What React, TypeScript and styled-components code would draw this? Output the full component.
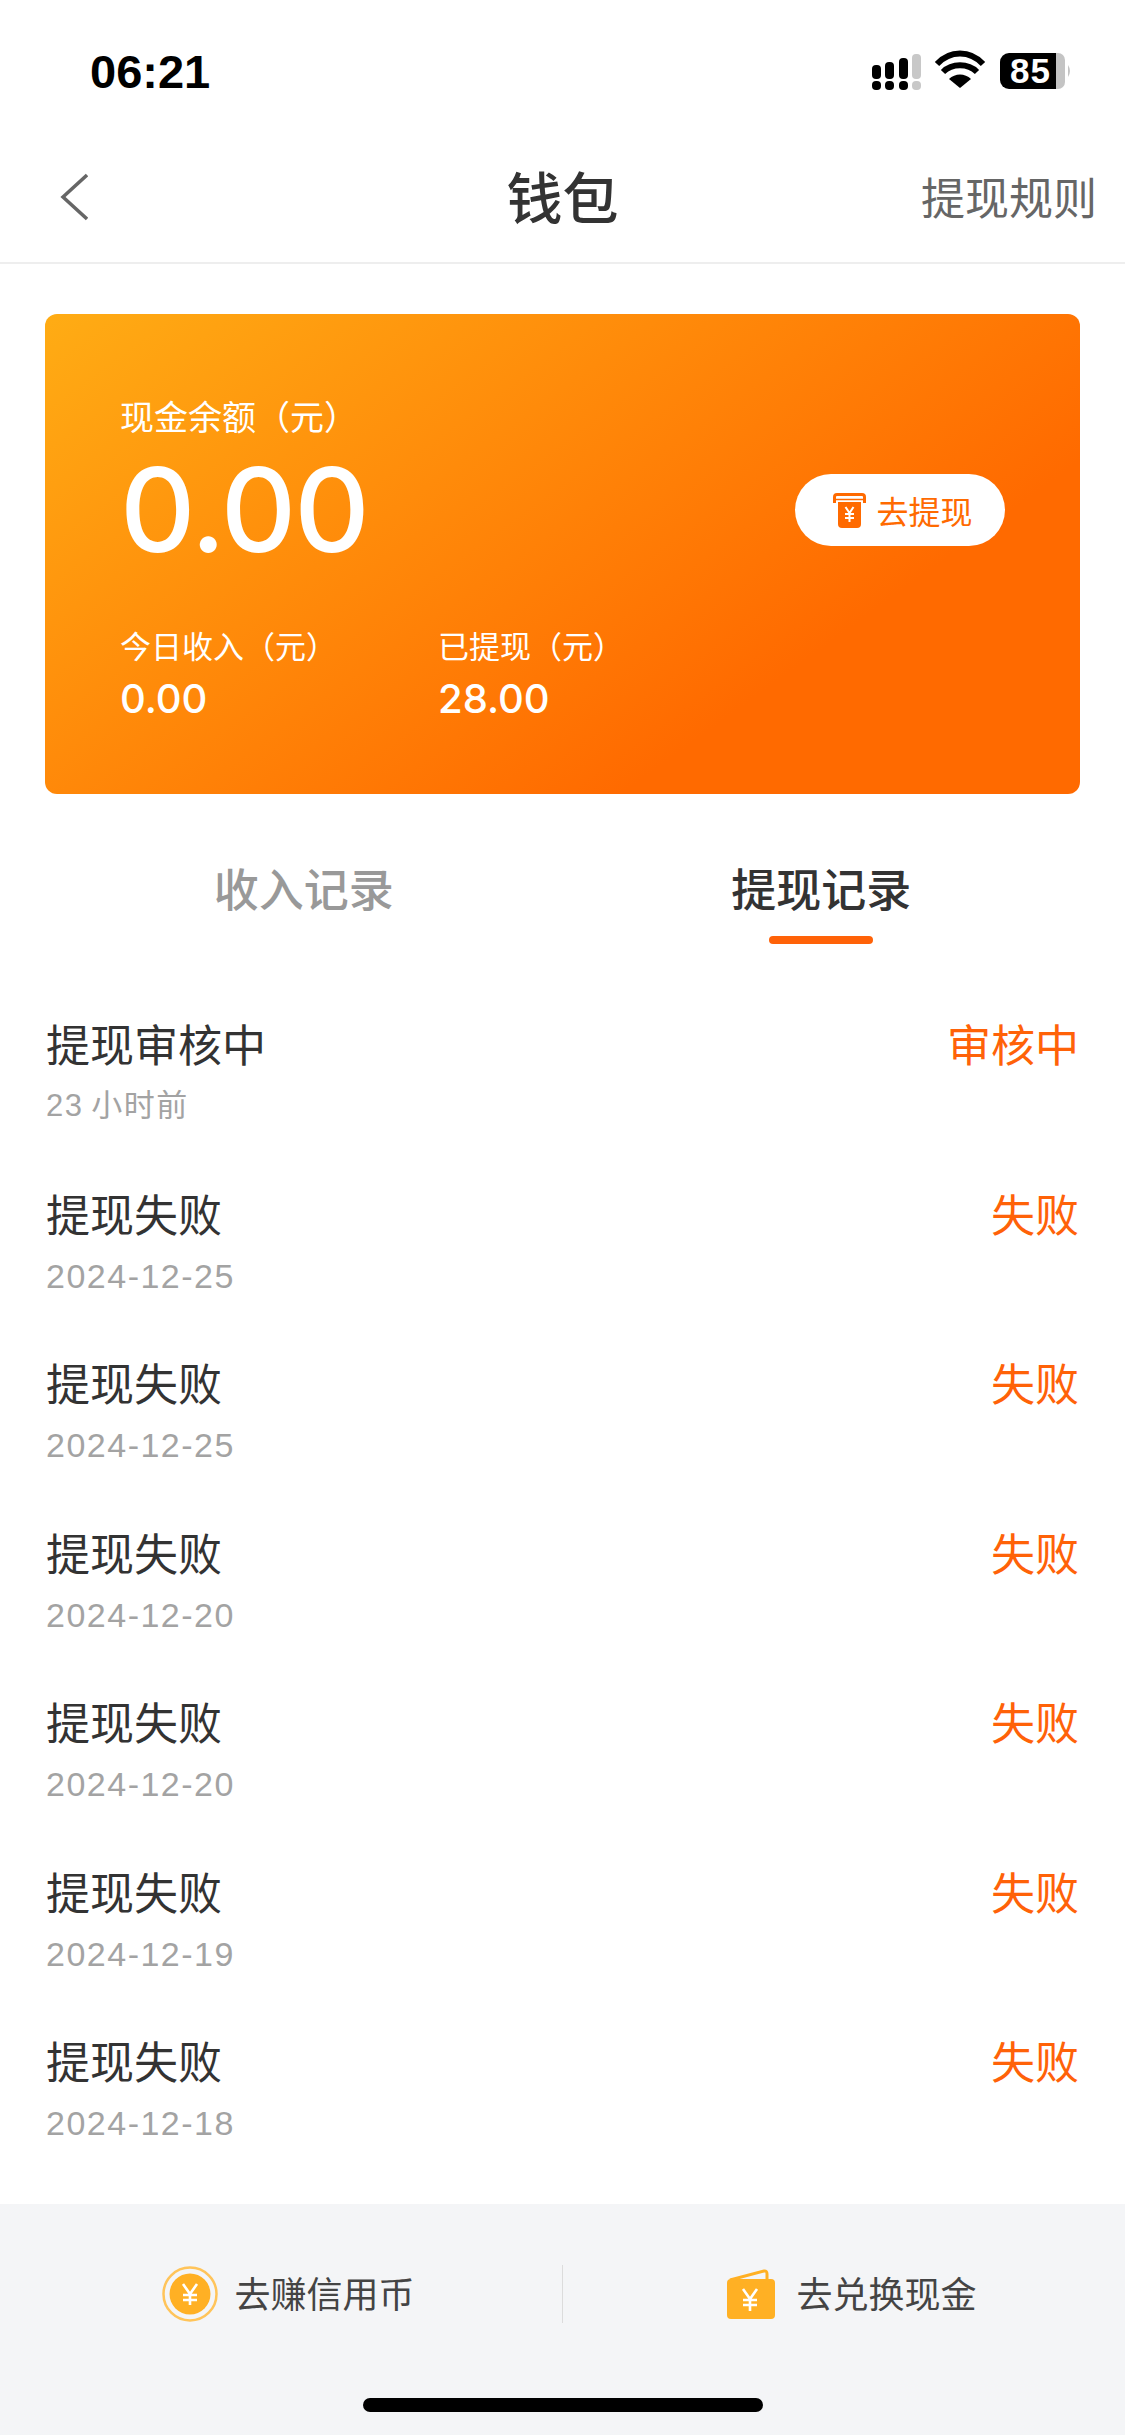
import React from "react";
import styled, { createGlobalStyle } from "styled-components";

const Global = createGlobalStyle`
  html, body { margin: 0; padding: 0; background: #fff; }
  * { box-sizing: border-box; }
  body { font-family: "Noto Sans CJK SC", "Liberation Sans", sans-serif; }
`;
const Page = styled.div`
  position: relative; width: 1125px; height: 2435px; background: #fff; overflow: hidden;
  display: flex; flex-direction: column;
`;
const StatusBar = styled.div`
  height: 132px; padding: 40px 53px 0 90px; display: flex; justify-content: space-between; align-items: flex-start;
`;
const Time = styled.div`
  font-family: "Liberation Sans", sans-serif; font-weight: 700; font-size: 47px; line-height: 64px; color: #000;
`;
const NavBar = styled.div`
  height: 132px; display: flex; align-items: center; justify-content: space-between; padding: 0 28px 0 60px;
  border-bottom: 2px solid #eeeeee; position: relative;
`;
const Title = styled.div`
  position: absolute; left: 0; right: 0; top: 28px; text-align: center; font-size: 56px; font-weight: 500; color: #333; line-height: 70px;
`;
const NavLink = styled.div`font-size: 44px; color: #666; line-height: 60px; margin-top: -2px;`;
const Card = styled.div`
  margin: 50px 45px 0; height: 480px; border-radius: 12px; padding: 77px 75px 0 75px;
  background: linear-gradient(144deg, #ffac14 0%, #ff6a00 73%); color: #fff; display: flex; flex-direction: column;
`;
const CardLabel = styled.div`font-size: 34px; line-height: 50px; height: 50px;`;
const BalanceRow = styled.div`display: flex; align-items: center; justify-content: space-between; height: 100px; margin-top: 19px;`;
const Balance = styled.div`font-family: "Inter", sans-serif; font-weight: 500; font-size: 117px; line-height: 100px; letter-spacing: -2px;`;
const WithdrawBtn = styled.div`
  width: 210px; height: 72px; padding-left: 6px; border-radius: 36px; background: #fff; color: #ff6a00; font-size: 32px;
  display: flex; align-items: center; justify-content: center; gap: 10px;
`;
const Stats = styled.div`display: flex; margin-top: 63px;`;
const Stat = styled.div<{ $w: number }>`width: ${(p) => p.$w}px;`;
const StatLabel = styled.div`font-size: 31px; line-height: 44px;`;
const StatValue = styled.div`font-family: "Inter", sans-serif; font-size: 40px; font-weight: 500; line-height: 50px; margin-top: 7px;`;
const Tabs = styled.div`display: grid; grid-template-columns: 1fr 1fr; padding: 62px 45px 0; margin-bottom: 56px;`;
const Tab = styled.div<{ $active?: boolean }>`
  height: 88px; text-align: center; position: relative; font-size: 45px; font-weight: 500; line-height: 64px;
  color: ${(p) => (p.$active ? "#333" : "#999")};
`;
const Underline = styled.span`
  position: absolute; bottom: 0; left: 50%; transform: translateX(-50%); width: 104px; height: 8px; border-radius: 4px; background: #ff6208;
`;
const List = styled.div`padding: 0 46px; display: flex; flex-direction: column;`;
const Row = styled.div`height: 169.5px; display: flex; justify-content: space-between; padding-top: 12px;`;
const RowTitle = styled.div`font-size: 44px; color: #333; line-height: 62px;`;
const RowDate = styled.div<{ $compact?: boolean }>`
  font-size: ${(p) => (p.$compact ? 31 : 34)}px; color: #a3a3a3; line-height: 46px; margin-top: 9px;
  font-family: "Liberation Sans", "Noto Sans CJK SC", sans-serif; letter-spacing: 1.5px;
`;
const RowStatus = styled.div`font-size: 44px; color: #ff6208; line-height: 62px;`;
const Footer = styled.div`
  position: absolute; left: 0; right: 0; bottom: 0; height: 231px; background: #f4f5f7; display: flex; padding-top: 61px;
`;
const FooterItem = styled.div<{ $gap: number }>`
  flex: 1; height: 58px; padding-left: 15px; display: flex; align-items: center; justify-content: center; gap: ${(p) => p.$gap}px;
  font-size: 36px; color: #444;
`;
const FooterLabel = styled.span`margin-top: -4px;`;
const Divider = styled.div`width: 1px; height: 58px; background: #dcdcdc;`;
const HomeBar = styled.div`
  position: absolute; left: 363px; bottom: 23px; width: 400px; height: 14px; border-radius: 7px; background: #000;
`;
const StatusIcons = styled.svg`margin-top: 10px;`;

const rows = [
  ["提现审核中", "23\u2009小时前", "审核中"],
  ["提现失败", "2024-12-25", "失败"],
  ["提现失败", "2024-12-25", "失败"],
  ["提现失败", "2024-12-20", "失败"],
  ["提现失败", "2024-12-20", "失败"],
  ["提现失败", "2024-12-19", "失败"],
  ["提现失败", "2024-12-18", "失败"],
];

export default function App() {
  return (
    <Page>
      <Global />
      <StatusBar>
        <Time>06:21</Time>
        <StatusIcons width="200" height="44" viewBox="872 50 200 44">
          <g fill="#000">
            <rect x="872" y="65" width="9" height="14" rx="4" /><rect x="885" y="62" width="9" height="17" rx="4" /><rect x="899" y="58" width="9" height="21" rx="4" />
            <rect x="872" y="81" width="9" height="9" rx="4" /><rect x="885" y="81" width="9" height="9" rx="4" /><rect x="899" y="81" width="9" height="9" rx="4" />
          </g>
          <rect x="912" y="54" width="9" height="25" rx="4" fill="#c8c8c8" /><rect x="912" y="81" width="9" height="9" rx="4" fill="#c8c8c8" />
          <path d="M937 64 C950 50 970 50 983 64 M943 72 C952 63 968 63 977 72" stroke="#000" strokeWidth="6" fill="none" />
          <path d="M949 79 C955 73 965 73 971 79 L960 88 Z" fill="#000" />
          <path d="M1009 53 H1056 V89 H1009 A9 9 0 0 1 1000 80 V62 A9 9 0 0 1 1009 53 Z" fill="#000" />
          <path d="M1056 53 H1058 A7 7 0 0 1 1065 60 V82 A7 7 0 0 1 1058 89 H1056 Z" fill="#c4c4c4" />
          <path d="M1068 65 Q1072 71 1068 77 Z" fill="#c4c4c4" />
          <text x="1010" y="83" fill="#fff" fontFamily="Liberation Sans" fontWeight="700" fontSize="35" textLength="40">85</text>
        </StatusIcons>
      </StatusBar>
      <NavBar>
        <svg width="28" height="48" viewBox="0 0 28 48"><path d="M27 2 L3 24 L27 46" stroke="#666" strokeWidth="3.5" fill="none" /></svg>
        <Title>钱包</Title>
        <NavLink>提现规则</NavLink>
      </NavBar>
      <Card>
        <CardLabel>现金余额（元）</CardLabel>
        <BalanceRow>
          <Balance>0.00</Balance>
          <WithdrawBtn>
            <svg width="33" height="35" viewBox="0 0 33 35">
              <path d="M1.5 10 V4 Q1.5 1.5 4 1.5 H29 Q31.5 1.5 31.5 4 V10" stroke="#ff6a00" strokeWidth="3" fill="none" />
              <path d="M1 6.5 H32" stroke="#ff6a00" strokeWidth="1.5" />
              <path d="M5 9 H28 V31 Q28 35 24 35 H9 Q5 35 5 31 Z" fill="#ff6a00" />
              <path d="M12.5 14 L16.5 20 L20.5 14 M16.5 20 V29 M12 21 H21 M12 25 H21" stroke="#fff" strokeWidth="2" fill="none" />
            </svg>
            去提现
          </WithdrawBtn>
        </BalanceRow>
        <Stats>
          <Stat $w={318}><StatLabel>今日收入（元）</StatLabel><StatValue>0.00</StatValue></Stat>
          <Stat $w={300}><StatLabel>已提现（元）</StatLabel><StatValue>28.00</StatValue></Stat>
        </Stats>
      </Card>
      <Tabs>
        <Tab>收入记录</Tab>
        <Tab $active>提现记录<Underline /></Tab>
      </Tabs>
      <List>
        {rows.map((r, i) => (
          <Row key={i}>
            <div><RowTitle>{r[0]}</RowTitle><RowDate $compact={i === 0}>{r[1]}</RowDate></div>
            <RowStatus>{r[2]}</RowStatus>
          </Row>
        ))}
      </List>
      <Footer>
        <FooterItem $gap={16}>
          <svg width="56" height="56" viewBox="0 0 56 56">
            <circle cx="28" cy="28" r="26.5" fill="none" stroke="#ffc45a" strokeWidth="2.5" />
            <circle cx="28" cy="28" r="20.5" fill="#ffb024" />
            <path d="M21 18 L28 28 L35 18 M28 28 V39 M21 29 H35 M21 34 H35" stroke="#fff" strokeWidth="2.6" fill="none" />
          </svg>
          <FooterLabel>去赚信用币</FooterLabel>
        </FooterItem>
        <Divider />
        <FooterItem $gap={20}>
          <svg width="50" height="50" viewBox="0 0 50 50">
            <path d="M4 11 L38 2 Q41 1.5 41 5 V12" stroke="#ffb024" strokeWidth="3" fill="none" />
            <rect x="1" y="10" width="48" height="40" rx="4" fill="#ffb024" />
            <path d="M17 20 L24 30 L31 20 M24 30 V42 M17 31 H31 M17 36 H31" stroke="#fff" strokeWidth="2.6" fill="none" />
          </svg>
          <FooterLabel>去兑换现金</FooterLabel>
        </FooterItem>
      </Footer>
      <HomeBar />
    </Page>
  );
}
